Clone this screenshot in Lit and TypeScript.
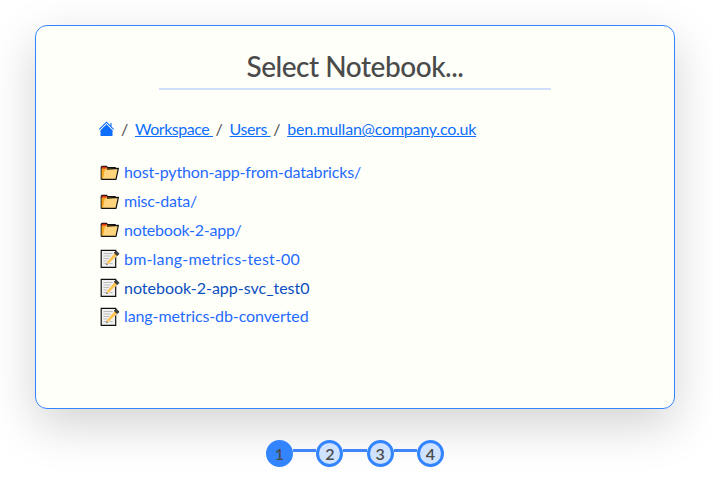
import { LitElement, html, css } from "lit";
import { customElement } from "lit/decorators.js";

interface Crumb { label: string; width: number; }
interface Entry { label: string; kind: "folder" | "note"; width: number; active?: boolean; }

const crumbs: Crumb[] = [
  { label: "Workspace\u00a0", width: 78 },
  { label: "Users\u00a0", width: 41 },
  { label: "ben.mullan@company.co.uk", width: 189 },
];

const entries: Entry[] = [
  { label: "host-python-app-from-databricks/", kind: "folder", width: 237 },
  { label: "misc-data/", kind: "folder", width: 73 },
  { label: "notebook-2-app/", kind: "folder", width: 117.5 },
  { label: "bm-lang-metrics-test-00", kind: "note", width: 176 },
  { label: "notebook-2-app-svc_test0", kind: "note", width: 185.5, active: true },
  { label: "lang-metrics-db-converted", kind: "note", width: 184.5 },
];

const folderIcon = html`<svg class="icon" viewBox="0 0 20 20">
  <path d="M1.2 16.6V4.2L2 3.4H6.6L7.6 4.6H15.2V7" fill="#f2a51d" stroke="#111" stroke-width="1.1"/>
  <path d="M2.2 3.8H6.2L6.8 5.4H1.9Z" fill="#e02a1a"/>
  <path d="M4.6 6.4L18.4 5.4L16 16.4H2.6Z" fill="#ffd47d"/>
  <path d="M1.7 6V15.9L2.6 16L4.8 6.2Z" fill="#f2a51d"/>
  <path d="M7 6.1L18.4 5.4L16 16.4H1.2" fill="none" stroke="#111" stroke-width="1.2" stroke-linejoin="round"/>
</svg>`;

const noteIcon = html`<svg class="icon" viewBox="0 0 20 20">
  <path d="M1.2 1.3H15.7V18.3H1.2Z" fill="#f1f1f1" stroke="#111" stroke-width="1.2"/>
  <path d="M3.5 4.5H12.5M3.5 7H10.5M3.5 9.5H9M3.5 12H7.5M3.5 14.6H12.5" stroke="#bbb" stroke-width="1"/>
  <path d="M15.6 2.8L18.5 5.2L9.2 14.4L6.3 15.8L7 12.8Z" fill="#ffc34d" stroke="#f1f1f1" stroke-width=".6"/>
  <path d="M14.3 3.9L16.2 2L19.1 4.8L17.2 6.6Z" fill="#444" stroke="#111" stroke-width=".7"/>
  <path d="M6.2 16L6.7 14.3L7.8 15.2Z" fill="#111"/>
</svg>`;

@customElement("app-root")
export class AppRoot extends LitElement {
  static styles = css`
    :host { display: block; height: 492px; overflow: hidden; background: #fff; color: #4a4a4a;
      font-family: Lato, "Open Sans", sans-serif; font-size: 16px; line-height: 24px; }
    * { box-sizing: border-box; }
    .page { height: 492px; padding: 25px 0 0 35px; }
    .card { width: 640px; height: 384px; border: 1px solid #3385ff; border-radius: 12px;
      background: #fffffa; box-shadow: 0 16px 48px rgba(0, 0, 0, .175); padding: 22px 63px 0; }
    .title { width: 392px; height: 42px; margin-left: 60px; border-bottom: 2px solid #cddffc;
      text-align: center; font-size: 28px; line-height: 36px; font-weight: 500; }
    .crumbs { display: flex; height: 24px; margin-top: 27px; align-items: center; }
    .home { width: 16px; height: 16px; display: block; margin: 0 7px 0 -1px; }
    .sep { width: 14px; }
    .link { color: #0d6efd; text-decoration: underline 1px; text-underline-offset: 1px; }
    .link + .sep { margin-left: 2.6px; }
    .list { margin-top: 17px; }
    .row { display: flex; align-items: center; height: 28.8px; color: #1f6bff; }
    .active { color: #0a4fc0; }
    .icon { width: 20px; height: 20px; margin: 1px 4.5px 0 .5px; display: block; }
    .fit { display: inline-block; white-space: nowrap; text-decoration: inherit; }
    .steps { display: flex; margin: 31px 0 0 231px; align-items: flex-start; }
    .step { width: 27px; height: 27px; border: 3px solid #3385ff; border-radius: 50%;
      background: #cfe2ff; font-weight: 600; line-height: 22px; text-align: center; }
    .current { background: #3385ff; }
    .bar { width: 23.3px; height: 3px; background: #3f86fb; margin-top: 9px; }
  `;

  async firstUpdated() {
    await document.fonts.ready;
    this.renderRoot.querySelectorAll<HTMLElement>(".fit").forEach((el) => {
      const target = Number(el.dataset.width);
      const natural = el.getBoundingClientRect().width;
      el.style.letterSpacing = `${(target - natural) / el.textContent!.length}px`;
    });
  }

  private fit(label: string, width: number) {
    return html`<span class="fit" data-width=${width}>${label}</span>`;
  }

  render() {
    return html`<div class="page">
      <div class="card">
        <div class="title">${this.fit("Select Notebook...", 217)}</div>
        <div class="crumbs">
          <svg class="home" viewBox="0 0 16 16" fill="#0d6efd">
            <path d="M8.5 3.3L14.5 9.3V14.5Q14.5 15 14 15H3Q2.5 15 2.5 14.5V9.3Z"/>
            <path d="M1.3 8.4L8.5 1.3L15.7 8.4M13 5.4V2" fill="none" stroke="#0d6efd" stroke-width="1.1"/>
            <path d="M2 9.1L8.5 2.7L15 9.1" fill="none" stroke="#fffffa" stroke-width=".4"/>
          </svg>
          ${crumbs.map((c) => html`<span class="sep">/</span><a class="link">${this.fit(c.label, c.width)}</a>`)}
        </div>
        <div class="list">
          ${entries.map((e) => html`<div class="row ${e.active ? "active" : ""}">
            ${e.kind === "folder" ? folderIcon : noteIcon}${this.fit(e.label, e.width)}
          </div>`)}
        </div>
      </div>
      <div class="steps">
        ${[1, 2, 3, 4].map((n) => html`${n > 1 ? html`<div class="bar"></div>` : ""}<div class="step ${n === 1 ? "current" : ""}">${n}</div>`)}
      </div>
    </div>`;
  }
}
